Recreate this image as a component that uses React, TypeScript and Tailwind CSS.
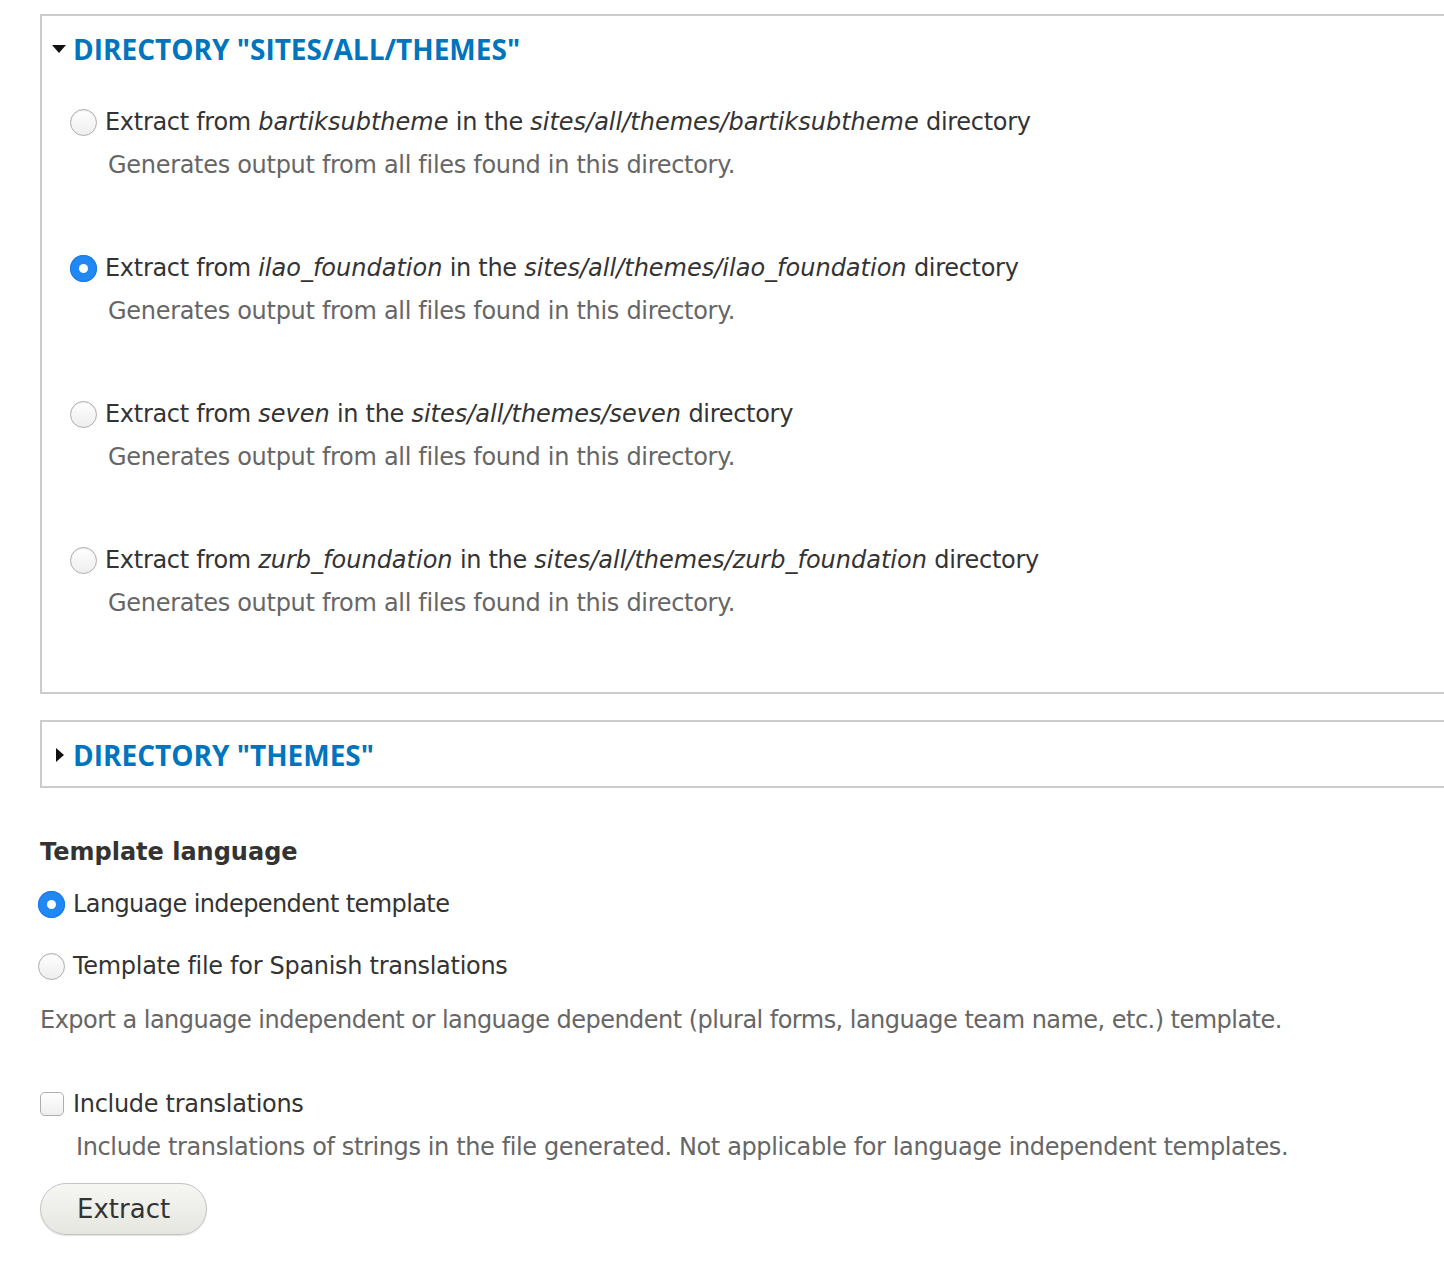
import React from 'react';

interface DirOption {
  name: string;
  path: string;
  checked?: boolean;
}

const options: DirOption[] = [
  { name: 'bartiksubtheme', path: 'sites/all/themes/bartiksubtheme' },
  { name: 'ilao_foundation', path: 'sites/all/themes/ilao_foundation', checked: true },
  { name: 'seven', path: 'sites/all/themes/seven' },
  { name: 'zurb_foundation', path: 'sites/all/themes/zurb_foundation' },
];

const body = "font-['DejaVu_Sans',sans-serif]";
const legend = "font-['Open_Sans',sans-serif] font-bold text-[28px] leading-[34px] tracking-normal text-[#0074bd] uppercase";

const Radio = ({ checked }: { checked?: boolean }) =>
  checked ? (
    <span className="flex h-[27px] w-[27px] shrink-0 items-center justify-center rounded-full bg-[#2088f5] shadow-[inset_0_0_0_1px_#1a7ae0]">
      <span className="h-[9px] w-[9px] rounded-full bg-white" />
    </span>
  ) : (
    <span className="h-[27px] w-[27px] shrink-0 rounded-full border border-[#adadad] bg-gradient-to-b from-white to-[#eeeeee] shadow-[inset_0_1px_1px_rgba(0,0,0,0.08)]" />
  );

const Checkbox = () => (
  <span className="h-[24px] w-[24px] shrink-0 rounded-[5px] border border-[#adadad] bg-gradient-to-b from-white to-[#eeeeee]" />
);

const CaretDown = () => (
  <svg width="14" height="8" viewBox="0 0 14 8" className="shrink-0">
    <path d="M0 0 L14 0 L7 8 Z" fill="#111" />
  </svg>
);

const CaretRight = () => (
  <svg width="8" height="14" viewBox="0 0 8 14" className="shrink-0">
    <path d="M0 0 L8 7 L0 14 Z" fill="#111" />
  </svg>
);

const App = () => {
  return (
    <div className={`min-h-[1280px] bg-white pl-[40px] pt-[14px] text-[24px] leading-[30px] tracking-[-0.3px] text-[#333] ${body}`}>
      {/* open fieldset */}
      <div className="h-[680px] border-y-2 border-l-2 border-[#ccc] pt-[16px] pl-[10px]">
        <div className="flex h-[34px] items-center">
          <CaretDown />
          <span className={`ml-[7px] ${legend}`}>Directory "sites/all/themes"</span>
        </div>
        <div className="mt-[41px] flex flex-col gap-[73px] pl-[18px]">
          {options.map((o) => (
            <div key={o.name}>
              <label className="flex items-center gap-[8px] whitespace-nowrap">
                <Radio checked={o.checked} />
                <span>
                  Extract from <em className="tracking-normal">{o.name}</em> in the{' '}
                  <em className="tracking-normal">{o.path}</em> directory
                </span>
              </label>
              <p className="mt-[13px] ml-[38px] text-[#666]">
                Generates output from all files found in this directory.
              </p>
            </div>
          ))}
        </div>
      </div>

      {/* collapsed fieldset */}
      <div className="mt-[26px] h-[68px] border-y-2 border-l-2 border-[#ccc] pt-[16px] pl-[14px]">
        <div className="flex h-[34px] items-center">
          <CaretRight />
          <span className={`ml-[9px] tracking-[-0.2px] ${legend}`}>Directory "themes"</span>
        </div>
      </div>

      <h3 className="mt-[49px] font-bold tracking-normal">Template language</h3>
      <div className="mt-[22px] flex flex-col gap-[32px]">
        <label className="-ml-[2px] flex items-center gap-[8px]">
          <Radio checked />
          <span className="tracking-[-0.6px]">Language independent template</span>
        </label>
        <label className="-ml-[2px] flex items-center gap-[8px]">
          <Radio />
          <span>Template file for Spanish translations</span>
        </label>
      </div>
      <p className="mt-[24px] tracking-[-0.53px] text-[#666]">
        Export a language independent or language dependent (plural forms, language team name, etc.) template.
      </p>

      <label className="mt-[54px] flex items-center gap-[9px]">
        <Checkbox />
        <span>Include translations</span>
      </label>
      <p className="mt-[13px] ml-[36px] tracking-[-0.38px] text-[#666]">
        Include translations of strings in the file generated. Not applicable for language independent templates.
      </p>

      <button className="mt-[21px] h-[52px] rounded-full border border-[#c4c4c4] bg-gradient-to-b from-[#f6f6f3] to-[#e6e6e1] px-[36px] text-[26px] tracking-normal text-[#333] shadow-[0_1px_1px_rgba(0,0,0,0.12)]">
        Extract
      </button>
    </div>
  );
};

export default App;
